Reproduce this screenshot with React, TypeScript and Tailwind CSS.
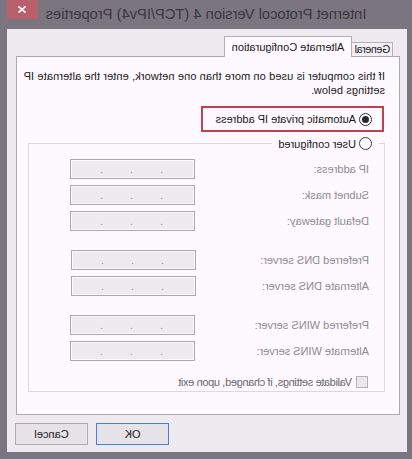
import React from "react";

function IpBox({ w = 125 }: { w?: number }) {
  return (
    <div
      className="h-[20px] border border-[#aca8b0] bg-[#eeeaf0] shadow-[inset_0_0_0_1px_#fbf9fc] flex pl-[31px] pt-[2px] text-[11px] leading-[14px] text-[#a08cb0]"
      style={{ width: w }}
    >
      <span className="w-[30px]">.</span>
      <span className="w-[30px]">.</span>
      <span className="w-[30px]">.</span>
    </div>
  );
}

function Row({ label, lw = 174, mt }: { label: string; lw?: number; mt: string }) {
  return (
    <div className={`flex items-center h-[20px] ${mt}`}>
      <div className="text-[#8e8a93]" style={{ width: lw }}>
        {label}
      </div>
      <IpBox />
    </div>
  );
}

export default function App() {
  return (
    <div className="w-[412px] h-[459px] [transform:scaleX(-1)] bg-[#7a757e] font-['Liberation_Sans',Arial,sans-serif] text-[11px] leading-[14px] text-[#1b1820] overflow-hidden">
      {/* title bar */}
      <div className="relative h-[29px]">
        <div className="text-center text-[14.7px] leading-[28px] text-[#3a3840]">
          Internet Protocol Version 4 (TCP/IPv4) Properties
        </div>
        <div className="absolute right-[7px] top-0 w-[31px] h-[19px] bg-[#b9606c] flex items-center justify-center">
          <svg width="8" height="7" viewBox="0 0 8 7">
            <path d="M0.5 0.5 L7.5 6.5 M7.5 0.5 L0.5 6.5" stroke="#ffffff" strokeWidth="1.6" />
          </svg>
        </div>
      </div>

      {/* client */}
      <div className="ml-[5px] w-[400px] h-[423px] bg-[#eeeaf0] pl-[7px] pt-[7px]">
        {/* tabs */}
        <div className="flex items-end h-[20px] pl-[7px]">
          <div className="w-[42px] h-[14px] border border-b-0 border-[#b3afb7] bg-[#f3eff5] flex items-center justify-center pr-[1px] leading-[13px] text-[10.5px] tracking-[-0.3px] whitespace-nowrap">
            General
          </div>
          <div className="relative z-10 self-start w-[128px] h-[21px] -ml-[1px] border border-b-0 border-[#b3afb7] bg-[#fdf9ff] flex items-center justify-center">
            Alternate Configuration
          </div>
        </div>

        {/* panel */}
        <div className="w-[384px] h-[359px] border border-[#aca8b0] bg-[#fdf9ff] pl-[14px] pt-[12px]">
          <p className="w-[368px] tracking-[0.12px]">
            If this computer is used on more than one network, enter the alternate IP settings below.
          </p>

          <div className="mt-[9px] ml-[1px] w-[183px] h-[26px] border-2 border-[#c0414f] flex items-center pl-[10px]">
            <div className="w-[13px] h-[13px] rounded-full border border-[#333037] bg-white flex items-center justify-center">
              <div className="w-[7px] h-[7px] rounded-full bg-[#2a272e]" />
            </div>
            <span className="ml-[3px]">Automatic private IP address</span>
          </div>

          {/* group box */}
          <div className="relative mt-[11px] w-[357px] h-[249px] border border-[#dcd8e0] pl-[15px] pt-[15px]">
            <div className="absolute left-[5px] -top-[7px] h-[13px] bg-[#fdf9ff] flex items-center pl-[7px] pr-[6px]">
              <div className="w-[13px] h-[13px] rounded-full border border-[#3f3c43] bg-white" />
              <span className="ml-[3px]">User configured</span>
            </div>

            <Row label="IP address:" mt="" />
            <Row label="Subnet mask:" mt="mt-[6px]" />
            <Row label="Default gateway:" mt="mt-[6px]" />
            <Row label="Preferred DNS server:" lw={173} mt="mt-[19px]" />
            <Row label="Alternate DNS server:" lw={173} mt="mt-[6px]" />
            <Row label="Preferred WINS server:" mt="mt-[19px]" />
            <Row label="Alternate WINS server:" mt="mt-[6px]" />

            <div className="flex items-center mt-[15px] ml-[1px] h-[12px]">
              <div className="w-[12px] h-[12px] border border-[#b5b1b9] bg-[#ebe7ed]" />
              <span className="ml-[4px] text-[#6a666e] tracking-[-0.35px]">Validate settings, if changed, upon exit</span>
            </div>
          </div>
        </div>

        {/* buttons */}
        <div className="flex justify-end gap-[8px] pr-[8px] mt-[8px]">
          <div className="w-[73px] h-[22px] border border-[#3d85d8] bg-[#e5e2e8] flex items-center justify-center">
            OK
          </div>
          <div className="w-[73px] h-[22px] border border-[#adaab0] bg-[#e5e2e8] flex items-center justify-center">
            Cancel
          </div>
        </div>
      </div>
    </div>
  );
}
